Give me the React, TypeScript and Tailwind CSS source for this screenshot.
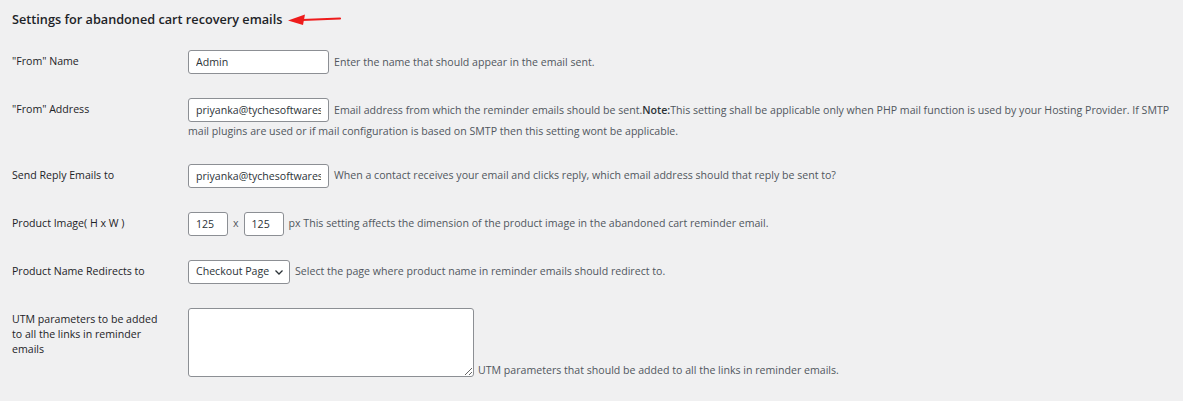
import React from "react";

const font = { fontFamily: '"Open Sans", "Noto Sans", sans-serif' };

function Row({ label, children, labelPt = "pt-[16px]" }: { label: React.ReactNode; children: React.ReactNode; labelPt?: string }) {
  return (
    <div className="flex items-start">
      <div className={`w-[176px] shrink-0 pr-[20px] ${labelPt} text-[10.6px] leading-[15px] font-medium text-[#1d2327]`}>{label}</div>
      <div className="flex-1 py-[12px] text-[10.6px] leading-[17px] text-[#50575e]">{children}</div>
    </div>
  );
}

const inputCls =
  "inline-block align-middle h-[24px] border border-[#8c8f94] rounded-[3px] bg-white px-[7px] text-[10.6px] text-[#2c3338] outline-none";

export default function App() {
  return (
    <div className="w-[1183px] h-[401px] bg-[#f0f0f1] pl-[12px] pr-[8px] overflow-hidden" style={font}>
      <h2 className="flex items-center pt-[10px] h-[30px] text-[12.7px] font-semibold text-[#1d2327] m-0">
        <span>Settings for abandoned cart recovery emails</span>
        <svg width="54" height="12" viewBox="0 0 54 12" className="ml-[6px]">
          <line x1="14" y1="6" x2="52" y2="4.5" stroke="#ee1c1c" strokeWidth="2.2" strokeLinecap="round" />
          <polygon points="0,6.5 17,0.5 15,11" fill="#ee1c1c" />
        </svg>
      </h2>
      <div className="mt-[8px]">
        <Row label={<>"From" Name</>}>
          <input className={`${inputCls} w-[141px]`} defaultValue="Admin" />
          <span className="ml-[5px] align-middle">Enter the name that should appear in the email sent.</span>
        </Row>
        <Row label={<>"From" Address</>}>
          <input className={`${inputCls} w-[141px]`} defaultValue="priyanka@tychesoftwares.com" />
          <span className="ml-[5px] align-middle">
            Email address from which the reminder emails should be sent.<b className="font-semibold text-[#2c3338]">Note:</b>This setting shall be applicable only when PHP mail function is used by your Hosting Provider. If SMTP mail plugins are used or if mail configuration is based on SMTP then this setting wont be applicable.
          </span>
        </Row>
        <Row label="Send Reply Emails to">
          <input className={`${inputCls} w-[141px]`} defaultValue="priyanka@tychesoftwares.com" />
          <span className="ml-[5px] align-middle">When a contact receives your email and clicks reply, which email address should that reply be sent to?</span>
        </Row>
        <Row label="Product Image( H x W )">
          <input className={`${inputCls} w-[40px]`} defaultValue="125" />
          <span className="mx-[5px] align-middle">x</span>
          <input className={`${inputCls} w-[40px]`} defaultValue="125" />
          <span className="ml-[5px] align-middle">px This setting affects the dimension of the product image in the abandoned cart reminder email.</span>
        </Row>
        <Row label="Product Name Redirects to">
          <span className={`${inputCls} w-[102px] inline-flex items-center justify-between pr-[5px]`}>
            <span>Checkout Page</span>
            <svg width="10" height="10" viewBox="0 0 10 10">
              <path d="M1.5 3.5 L5 7 L8.5 3.5" fill="none" stroke="#2c3338" strokeWidth="1.3" />
            </svg>
          </span>
          <span className="ml-[5px] align-middle">Select the page where product name in reminder emails should redirect to.</span>
        </Row>
        <Row label="UTM parameters to be added to all the links in reminder emails" labelPt="pt-[16px]">
          <textarea className="inline-block align-bottom w-[286px] h-[69px] border border-[#8c8f94] rounded-[3px] bg-white outline-none" />
          <span className="ml-[4px] align-bottom leading-[14px]">UTM parameters that should be added to all the links in reminder emails.</span>
        </Row>
      </div>
    </div>
  );
}
